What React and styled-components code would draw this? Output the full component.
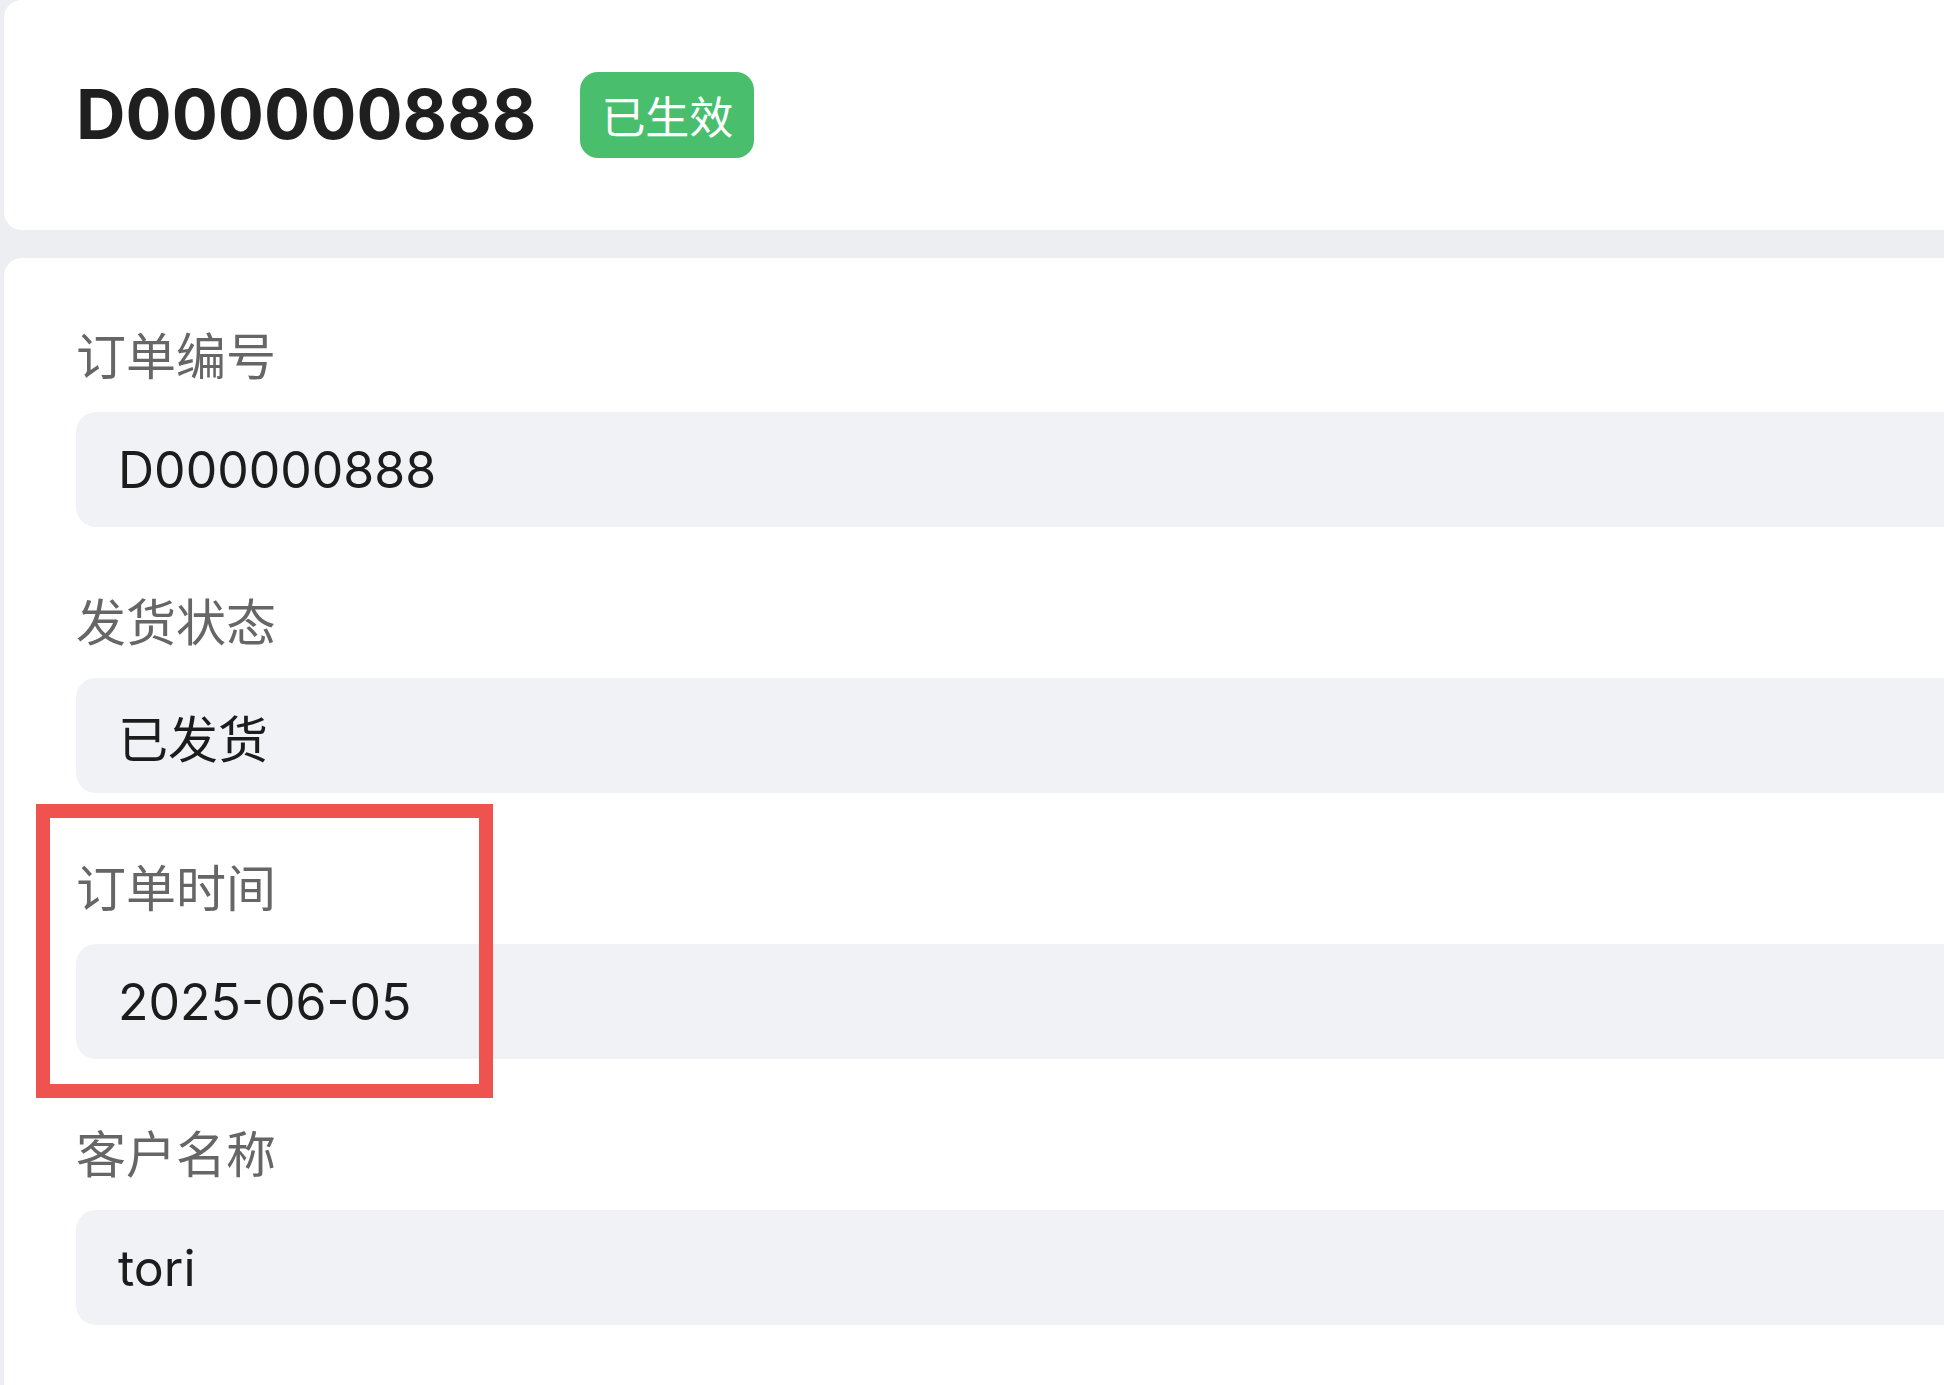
import React from "react";
import styled, { createGlobalStyle } from "styled-components";

const GlobalStyle = createGlobalStyle`
  html, body {
    margin: 0;
    padding: 0;
    background: #edeef2;
  }
  body {
    font-family: "Inter", "Noto Sans CJK SC", "Noto Sans", sans-serif;
    -webkit-font-smoothing: antialiased;
  }
  * { box-sizing: border-box; }
`;

const Page = styled.div`
  display: flex;
  flex-direction: column;
  gap: 28px;
  padding-left: 4px;
  width: 100%;
  min-height: 100vh;
  overflow: hidden;
`;

const HeaderCard = styled.header`
  display: flex;
  align-items: center;
  gap: 44px;
  height: 230px;
  width: calc(100% + 40px);
  padding-left: 72px;
  background: #ffffff;
  border-radius: 18px;
`;

const Title = styled.h1`
  margin: 0;
  font-size: 68.5px;
  font-weight: 700;
  color: #1f1f1f;
  line-height: 1;
`;

const Badge = styled.span`
  display: inline-flex;
  align-items: center;
  height: 86px;
  padding: 0 21px;
  border-radius: 18px;
  background: #49bf6e;
  color: #ffffff;
  font-size: 44px;
  font-family: "Noto Sans CJK SC", sans-serif;
`;

const DetailCard = styled.section`
  flex: 1;
  display: flex;
  flex-direction: column;
  gap: 58px;
  width: calc(100% + 40px);
  padding: 61px 0 60px 72px;
  background: #ffffff;
  border-radius: 18px 18px 0 0;
`;

const Field = styled.div`
  position: relative;
  display: flex;
  flex-direction: column;
  gap: 24px;
`;

const Label = styled.div`
  font-size: 50px;
  line-height: 69px;
  color: #666666;
  font-family: "Noto Sans CJK SC", sans-serif;
`;

const Value = styled.div`
  display: flex;
  align-items: center;
  height: 115px;
  padding-left: 42px;
  background: #f1f2f6;
  border-radius: 20px;
  font-size: 50px;
  color: #1c1c1c;
`;

const Highlight = styled.div`
  position: absolute;
  left: -40px;
  top: -47px;
  width: 457px;
  height: 294px;
  border: 14px solid #ef5350;
  pointer-events: none;
`;

const fields = [
  { label: "订单编号", value: "D000000888" },
  { label: "发货状态", value: "已发货" },
  { label: "订单时间", value: "2025-06-05", highlight: true },
  { label: "客户名称", value: "tori" },
];

export default function App() {
  return (
    <>
      <GlobalStyle />
      <Page>
        <HeaderCard>
          <Title>D000000888</Title>
          <Badge>已生效</Badge>
        </HeaderCard>
        <DetailCard>
          {fields.map((f) => (
            <Field key={f.label}>
              <Label>{f.label}</Label>
              <Value>{f.value}</Value>
              {f.highlight && <Highlight />}
            </Field>
          ))}
        </DetailCard>
      </Page>
    </>
  );
}
